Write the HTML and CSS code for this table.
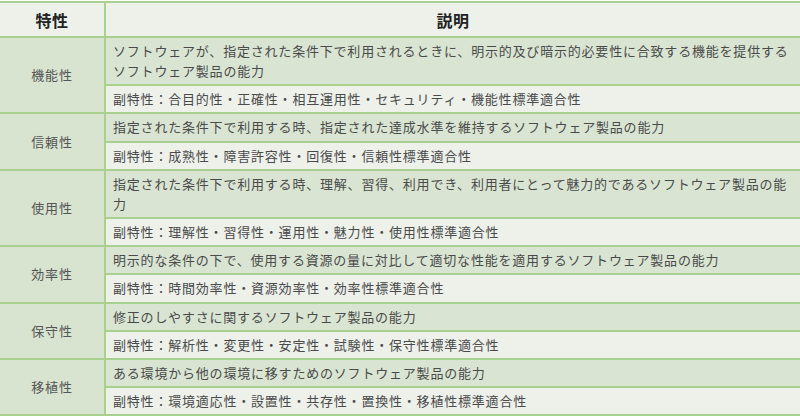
FILE: index.html
```html
<!DOCTYPE html>
<html lang="ja">
<head>
<meta charset="utf-8">
<link rel="stylesheet" href="styles.css">
</head>
<body>
<table class="spec">
  <thead>
    <tr><th class="col-name">特性</th><th class="col-desc">説明</th></tr>
  </thead>
  <tbody>
    <tr><td class="name" rowspan="2">機能性</td><td class="main">ソフトウェアが、指定された条件下で利用されるときに、明示的及び暗示的必要性に合致する機能を提供するソフトウェア製品の能力</td></tr>
    <tr><td class="sub">副特性：合目的性・正確性・相互運用性・セキュリティ・機能性標準適合性</td></tr>
    <tr><td class="name" rowspan="2">信頼性</td><td class="main">指定された条件下で利用する時、指定された達成水準を維持するソフトウェア製品の能力</td></tr>
    <tr><td class="sub">副特性：成熟性・障害許容性・回復性・信頼性標準適合性</td></tr>
    <tr><td class="name" rowspan="2">使用性</td><td class="main">指定された条件下で利用する時、理解、習得、利用でき、利用者にとって魅力的であるソフトウェア製品の能力</td></tr>
    <tr><td class="sub">副特性：理解性・習得性・運用性・魅力性・使用性標準適合性</td></tr>
    <tr><td class="name" rowspan="2">効率性</td><td class="main">明示的な条件の下で、使用する資源の量に対比して適切な性能を適用するソフトウェア製品の能力</td></tr>
    <tr><td class="sub">副特性：時間効率性・資源効率性・効率性標準適合性</td></tr>
    <tr><td class="name" rowspan="2">保守性</td><td class="main">修正のしやすさに関するソフトウェア製品の能力</td></tr>
    <tr><td class="sub">副特性：解析性・変更性・安定性・試験性・保守性標準適合性</td></tr>
    <tr><td class="name" rowspan="2">移植性</td><td class="main">ある環境から他の環境に移すためのソフトウェア製品の能力</td></tr>
    <tr><td class="sub">副特性：環境適応性・設置性・共存性・置換性・移植性標準適合性</td></tr>
  </tbody>
</table>
</body>
</html>
```
FILE: styles.css
```css
html, body {
  margin: 0;
  padding: 0;
  background: #ffffff;
}
body {
  padding-top: 1px;
  font-family: "Noto Sans CJK JP", "Noto Sans", sans-serif;
  color: #4a4a4a;
}
.spec {
  width: 800px;
  border-collapse: collapse;
  table-layout: fixed;
  font-size: 13px;
  letter-spacing: 0.8px;
  line-height: 20px;
  text-spacing-trim: space-all;
}
.spec th, .spec td {
  border: 2px solid #a9d08e;
  padding: 3px 6px 3.2px 7px;
  vertical-align: middle;
}
.spec tr > :first-child { border-left: none; }
.spec tr > :last-child { border-right: none; }
.spec .name { border-right: 2px solid #a9d08e; }
.col-name { width: 96px; }
.spec th {
  background: #edf1e9;
  color: #222;
  font-size: 16px;
  font-weight: bold;
  height: 27px;
  text-align: center;
  letter-spacing: 0.5px;
  padding: 3px 4px;
}
.spec .name {
  background: #d8e4d0;
  text-align: center;
  padding: 3px 4px;
  color: #555;
}
.spec .main {
  background: #d9e5d2;
}
.spec .sub {
  background: #edf1ea;
}
```
